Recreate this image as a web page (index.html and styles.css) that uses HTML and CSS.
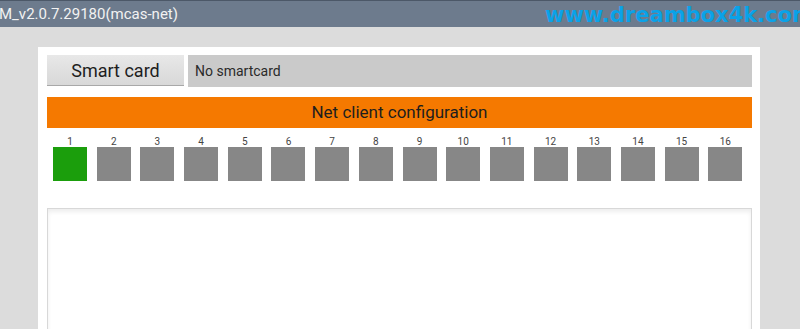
FILE: index.html
```html
<!DOCTYPE html>
<html>
<head>
  <meta name="viewport" content="width=device-width, initial-scale=1.0">
  <title>mcas-net</title>
  <link rel="stylesheet" href="styles.css">
</head>
<body>
  <!-- Title bar -->
  <div class="titlebar">
    <span class="app-title">M_v2.0.7.29180(mcas-net)</span>
  </div>
  <!-- watermark sits over the screenshot -->
  <span class="watermark">www.dreambox4k.com</span>

  <div class="panel">
    <!-- Smart card row -->
    <div class="card-row">
      <button class="card-btn">Smart card</button>
      <div class="card-status">No smartcard</div>
    </div>

    <div class="section-bar">Net client configuration</div>

    <!-- Client slots -->
    <div class="slots">
      <div class="slot"><span>1</span><div class="box active"></div></div>
      <div class="slot"><span>2</span><div class="box"></div></div>
      <div class="slot"><span>3</span><div class="box"></div></div>
      <div class="slot"><span>4</span><div class="box"></div></div>
      <div class="slot"><span>5</span><div class="box"></div></div>
      <div class="slot"><span>6</span><div class="box"></div></div>
      <div class="slot"><span>7</span><div class="box"></div></div>
      <div class="slot"><span>8</span><div class="box"></div></div>
      <div class="slot"><span>9</span><div class="box"></div></div>
      <div class="slot"><span>10</span><div class="box"></div></div>
      <div class="slot"><span>11</span><div class="box"></div></div>
      <div class="slot"><span>12</span><div class="box"></div></div>
      <div class="slot"><span>13</span><div class="box"></div></div>
      <div class="slot"><span>14</span><div class="box"></div></div>
      <div class="slot"><span>15</span><div class="box"></div></div>
      <div class="slot"><span>16</span><div class="box"></div></div>
    </div>

    <div class="details"></div>
  </div>
</body>
</html>
```

FILE: styles.css
```css
body {
  font-family: Roboto, "Noto Sans", sans-serif;
  background-color: #dcdcdc;
  margin: 0;
  padding: 0;
  height: 329px;
  overflow: hidden;
  position: relative;
}

.titlebar {
  display: flex;
  align-items: center;
  height: 26px;
  background-color: #6d7b8d;
  border-top: 1px solid #4c5868;
  overflow: hidden;
  white-space: nowrap;
}

.app-title {
  color: #f2f2f2;
  font-size: 15px;
  margin-left: -1px;
}

.watermark {
  position: absolute;
  left: 545px;
  top: 3px;
  color: #0aa2e8;
  font-family: "DejaVu Sans", sans-serif;
  font-weight: bold;
  font-size: 21px;
  white-space: nowrap;
}

.panel {
  background-color: #fff;
  margin: 20px 40px 0 38px;
  padding: 8px 8px 0 9px;
  height: 300px;
}

.card-row {
  display: flex;
  gap: 4px;
  height: 32px;
}

.card-btn {
  width: 137px;
  height: 31px;
  font-family: Roboto, sans-serif;
  font-size: 18px;
  color: #1e1e1e;
  border: none;
  border-bottom: 1px solid #a8a8a8;
  background: linear-gradient(#e8e8e8, #d8d8d8);
  padding: 0;
}

.card-status {
  flex: 1;
  background-color: #cacaca;
  color: #2a2a2a;
  font-size: 14px;
  line-height: 32px;
  padding-left: 7px;
}

.section-bar {
  margin-top: 10px;
  height: 31px;
  line-height: 31px;
  background-color: #f57900;
  color: #1e1e1e;
  font-size: 17px;
  text-align: center;
}

.slots {
  display: grid;
  grid-template-columns: repeat(16, 34px);
  column-gap: 9.7px;
  padding-left: 6px;
  margin-top: 8px;
}

.slot {
  display: flex;
  flex-direction: column;
  align-items: center;
}

.slot span {
  font-size: 10px;
  color: #444;
  height: 11px;
  line-height: 11px;
}

.box {
  width: 34px;
  height: 34px;
  background-color: #878787;
}

.box.active {
  background-color: #1b9e0c;
}

.details {
  margin-top: 27px;
  height: 150px;
  border: 1px solid #d8d8d8;
  box-shadow: inset 0 3px 4px rgba(0, 0, 0, 0.07);
}
```
